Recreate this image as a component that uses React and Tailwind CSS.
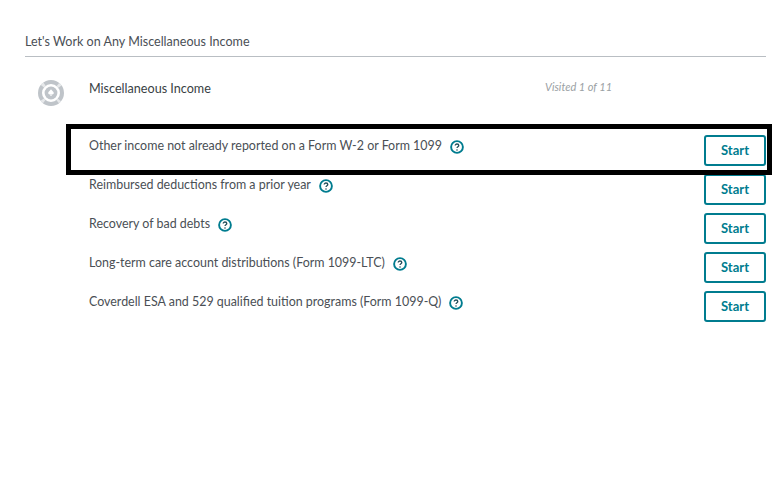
const topics = [
  "Other income not already reported on a Form W-2 or Form 1099",
  "Reimbursed deductions from a prior year",
  "Recovery of bad debts",
  "Long-term care account distributions (Form 1099-LTC)",
  "Coverdell ESA and 529 qualified tuition programs (Form 1099-Q)",
];

function HelpIcon() {
  return (
    <svg width="14" height="14" viewBox="0 0 14 14" fill="none" className="ml-[8px] mt-[1px] shrink-0">
      <circle cx="7" cy="7" r="5.9" stroke="#007c8f" strokeWidth="1.9" />
      <path d="M5.2 5.6c0-1 .8-1.6 1.8-1.6s1.8.6 1.8 1.5c0 1.3-1.8 1.3-1.8 2.6" stroke="#25505c" strokeWidth="1.3" />
      <circle cx="7" cy="10" r=".8" fill="#25505c" />
    </svg>
  );
}

function ChipIcon() {
  return (
    <svg width="26" height="26" viewBox="0 0 26 26" fill="none">
      <circle cx="13" cy="13" r="11" stroke="#bfc4c9" strokeWidth="4" />
      <circle cx="13" cy="13" r="11" stroke="#e6e8ea" strokeWidth="4" strokeDasharray="3 14.28" strokeDashoffset="1.5" transform="rotate(45 13 13)" />
      <circle cx="13" cy="13" r="6.4" fill="#bfc4c9" />
      <path d="M13 9.2c1 1.4 2.8 2.4 2.8 3.9 0 1.3-1.5 1.6-2.4 1l.5 1.7h-1.8l.5-1.7c-.9.6-2.4.3-2.4-1 0-1.5 1.8-2.5 2.8-3.9z" fill="#ffffff" />
    </svg>
  );
}

export default function App() {
  return (
    <div className="relative h-[501px] w-[779px] overflow-hidden bg-white font-['Lato',sans-serif] text-[#4a4f55]">
      <div className="ml-[25px] mr-[13px] pt-[34px]">
        {/* Header */}
        <h1 className="h-[23px] border-b border-[#b9bec3] text-[12.55px] leading-[16px] font-normal">
          Let's Work on Any Miscellaneous Income
        </h1>

        <div className="mt-[22px] flex h-[45px] items-start">
          <div className="ml-[13px] w-[51px] pt-[1px]">
            <ChipIcon />
          </div>
          <p className="mt-[1px] w-[456px] text-[12.6px] leading-[18px] text-[#393f45]">Miscellaneous Income</p>
          <p className="text-[11px] leading-[16px] italic text-[#9a9fa4]">Visited 1 of 11</p>
        </div>

        {/* Topics */}
        <div className="flex flex-col">
          {topics.map((topic) => (
            <div key={topic} className="flex h-[39px] items-start justify-between pl-[64px]">
              <div className="flex items-center pt-[13px] text-[12.45px] leading-[18px]">
                {topic}
                <HelpIcon />
              </div>
              <button className="mt-[11px] h-[31px] w-[62px] rounded-[3px] border-2 border-[#007c8f] bg-white text-[13px] font-bold text-[#007c8f]">
                Start
              </button>
            </div>
          ))}
        </div>
      </div>

      {/* Highlight box */}
      <div className="pointer-events-none absolute left-[66px] top-[124px] h-[51px] w-[706px] border-[5px] border-black" />
    </div>
  );
}
